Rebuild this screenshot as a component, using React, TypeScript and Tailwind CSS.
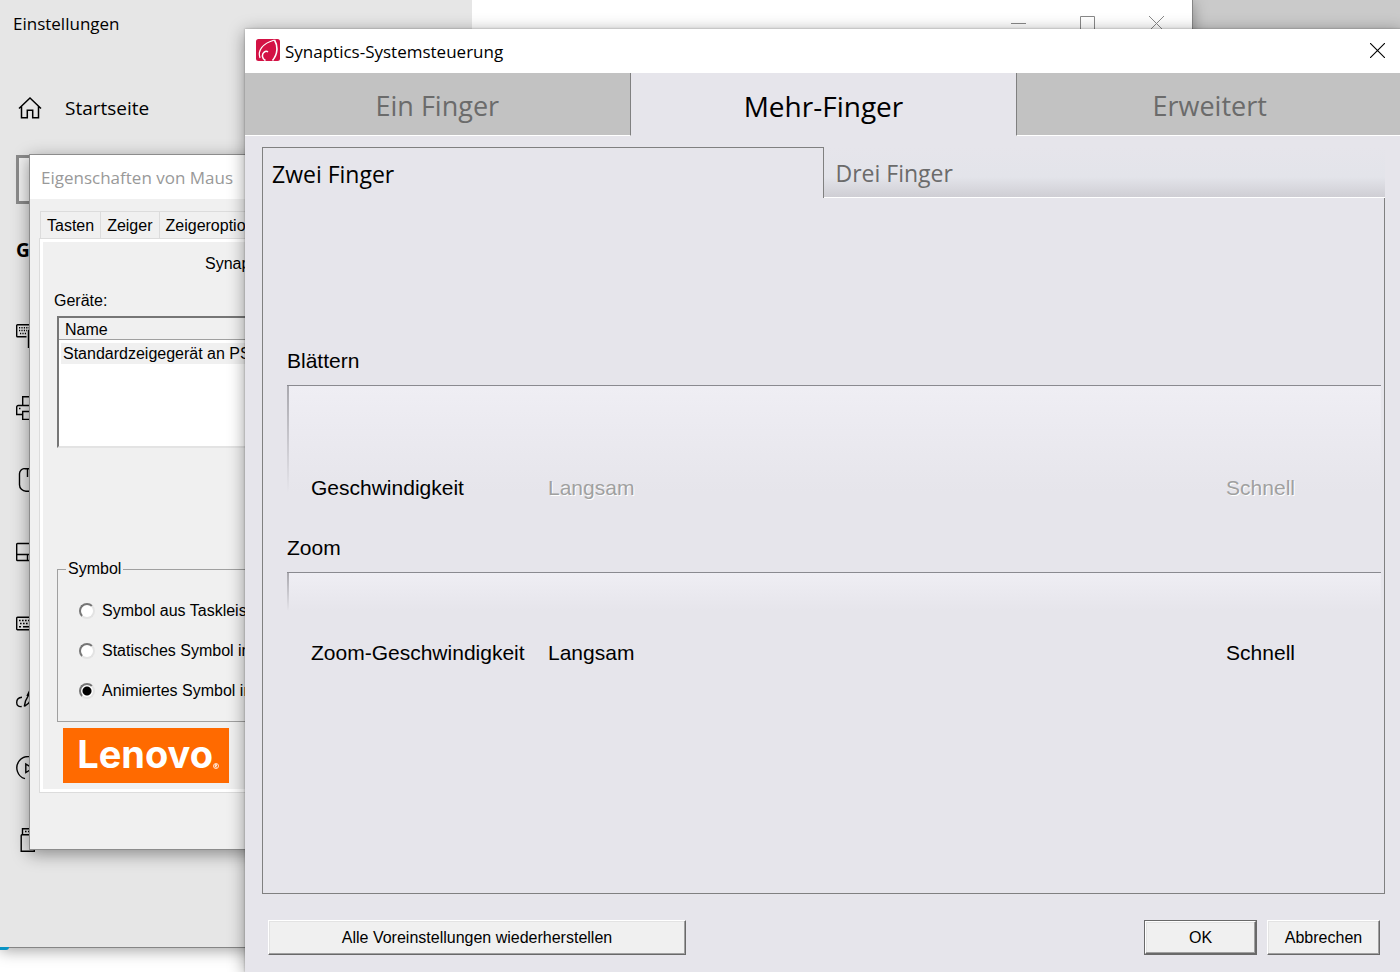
import type { ReactNode } from 'react';

const segoe = "font-['Open_Sans','Noto_Sans',sans-serif]";
const arial = "font-['Liberation_Sans',Arial,sans-serif]";

function Glyph({ children }: { children: ReactNode }) {
  return (
    <svg viewBox="0 0 24 24" className="size-6 shrink-0" fill="none" stroke="#000" strokeWidth="1.4" aria-hidden="true">
      {children}
    </svg>
  );
}

const navIcons: { label: string; icon: ReactNode }[] = [
  {
    label: 'Bluetooth',
    icon: (
      <>
        <path d="M10.500 12.700H1.500a.8.8 0 0 1-.8-.8V1.500a.8.8 0 0 1 .8-.8H24M12.500 24V6.500H24" />
        <path d="M3 3.700h20M3 6.500h8M4 9.500h6" strokeDasharray="1.200 1.200" />
      </>
    ),
  },
  {
    label: 'Drucker',
    icon: (
      <>
        <path d="M6.700 9.500V.7h11V9.500M6.500 18.500H.7V11a1.500 1.500 0 0 1 1.500-1.500h20a1.500 1.500 0 0 1 1.500 1.500v7.500h-5.500" />
        <path d="M6.700 15.500h11v8h-11zM3 12.500h1.500" />
      </>
    ),
  },
  {
    label: 'Maus',
    icon: <path d="M9 .7h6a5 5 0 0 1 5 5v11a6.500 6.500 0 0 1-6.500 6.500h-3.500a6.500 6.500 0 0 1-6.500-6.500v-11a5 5 0 0 1 5.500-5zM11.500 1v8" />,
  },
  {
    label: 'Touchpad',
    icon: <path d="M1.500 3.500h21a.8.8 0 0 1 .8.8v15.400a.8.8 0 0 1-.8.8h-21a.8.8 0 0 1-.8-.8V4.300a.8.8 0 0 1 .8-.8zM1 14.500h22M11.500 14.500v6" />,
  },
  {
    label: 'Eingabe',
    icon: (
      <>
        <path d="M1.500 5.200h21a.8.8 0 0 1 .8.8v11a.8.8 0 0 1-.8.8h-21a.8.8 0 0 1-.8-.8V6a.8.8 0 0 1 .8-.8z" />
        <path d="M3 8.500h18M4 11.500h18" strokeDasharray="1.600 1.400" />
        <path d="M3 14.700h2M7 14.700h10" />
      </>
    ),
  },
  {
    label: 'Stift',
    icon: <path d="M6 13.300C2.500 13.500.7 15.500.7 18.500s1.800 4.500 5 4M8.300 22.500l1.200-5.500L18 1M8.300 22.500l4.200-3.200 6-10M11 12L16 2" />,
  },
  {
    label: 'Automatische Wiedergabe',
    icon: <path d="M9 22.700A11.300 11.300 0 1 1 14 23M9.800 8v8.500l7-4.200z" />,
  },
  {
    label: 'USB',
    icon: (
      <>
        <path d="M6.500 6.500V.7h10v5.800M5.500 6.700h12a.8.8 0 0 1 .8.8v15.700H5.200V7.500a.8.8 0 0 1 .8-.8z" />
        <path d="M9 3.500h1.500M12 3.500h1.500" />
      </>
    ),
  },
];

function SettingsWindow() {
  return (
    <section
      aria-label="Einstellungen"
      className={`absolute top-0 right-[207px] bottom-6 left-0 flex border-r border-b border-[#858585] bg-white shadow-[0_3px_14px_rgba(0,0,0,0.35)] ${segoe}`}
    >
      <aside className="flex w-[472px] flex-col bg-[#e6e6e6]">
        <h1 className="px-[13px] pt-3 text-[17px] leading-6">Einstellungen</h1>
        <a href="#start" className="mt-[54px] flex h-9 items-center gap-[23px] px-[18px] text-[19px]">
          <svg viewBox="0 0 24 24" className="size-6 shrink-0" fill="none" stroke="#000" strokeWidth="1.500" aria-hidden="true">
            <path d="M1 12.500L12 2l11 10.500M3.500 10.500v11.200h5.800v-7.500h5.400v7.500h5.800V10.500" />
          </svg>
          Startseite
        </a>
        <input
          type="text"
          aria-label="Einstellung suchen"
          className="mt-[29px] ml-4 h-[49px] w-[430px] border-[3px] border-[#8a8a8a] bg-[#f0f0f0]"
        />
        <h2 className="mt-8 px-4 text-[19px] leading-7 font-bold">G</h2>
        <nav className="mt-9 flex flex-col">
          {navIcons.map((item) => (
            <a key={item.label} href="#geraete" aria-label={item.label} className="flex h-[72px] items-center px-4">
              <Glyph>{item.icon}</Glyph>
            </a>
          ))}
        </nav>
      </aside>
      <div className="flex flex-1 items-start justify-end gap-[54px] pt-4 pr-7 text-[#888]">
        <button type="button" aria-label="Minimieren">
          <svg viewBox="0 0 15 15" className="size-[15px]" fill="none" stroke="currentColor" aria-hidden="true">
            <path d="M0 7.500h15" />
          </svg>
        </button>
        <button type="button" aria-label="Maximieren">
          <svg viewBox="0 0 15 15" className="size-[15px]" fill="none" stroke="currentColor" aria-hidden="true">
            <path d="M.5.5h14v14H.5z" />
          </svg>
        </button>
        <button type="button" aria-label="Schließen">
          <svg viewBox="0 0 15 15" className="size-[15px]" fill="none" stroke="currentColor" aria-hidden="true">
            <path d="M0 0l15 15M15 0L0 15" />
          </svg>
        </button>
      </div>
    </section>
  );
}

const symbolOptions = ['Symbol aus Taskleis', 'Statisches Symbol in', 'Animiertes Symbol in'];

function MouseWindow() {
  return (
    <section
      aria-label="Eigenschaften von Maus"
      className={`absolute top-[154px] left-[29px] w-[500px] border border-[#8c8c8c] bg-[#f0f0f0] text-base shadow-[0_4px_16px_rgba(0,0,0,0.4)] ${arial}`}
    >
      <h2 className={`bg-white pt-0.5 pl-[11px] text-[17px] leading-[42px] text-[#999] ${segoe}`}>Eigenschaften von Maus</h2>
      <div className="px-[9px] pt-3 pb-14">
        <div role="tablist" className="ml-px flex border-t border-l border-[#dcdcdc]">
          {['Tasten', 'Zeiger', 'Zeigeroptio'].map((tab) => (
            <button key={tab} type="button" role="tab" className="border-r border-[#dcdcdc] px-1.5 pt-0.5 leading-6">
              {tab}
            </button>
          ))}
        </div>
        <div className="border border-[#dcdcdc]">
          <div className="border-[3px] border-white px-[14px] pt-2.5 pb-1.5">
            <p className="pl-[148px] leading-6">Synap</p>
            <p className="-ml-[3px] mt-[13px] leading-6">Geräte:</p>
            <div className="mt-[3px] h-[132px] border-2 border-t-[#767676] border-r-white border-b-[#e3e3e3] border-l-[#767676] bg-white">
              <table className="w-full border-separate border-spacing-0 text-left">
                <thead>
                  <tr className="bg-[#f0f0f0]">
                    <th className="border-b border-[#a0a0a0] px-1.5 pt-0.5 leading-[19px] font-normal">Name</th>
                  </tr>
                </thead>
                <tbody>
                  <tr>
                    <td className="px-0.5 pt-[3px] leading-[21px]">
                      <span className="block bg-[#f0f0f0] pl-0.5">Standardzeigegerät an PS</span>
                    </td>
                  </tr>
                </tbody>
              </table>
            </div>
            <fieldset className="mt-[109px] border border-[#a0a0a0] pb-[18px] pl-[21px]">
              <legend className="-ml-[13px] px-0.5 leading-6">Symbol</legend>
              <div className="flex flex-col gap-4 pt-[18px]">
                {symbolOptions.map((option, index) => (
                  <label key={option} className="flex items-center gap-[7px] leading-6">
                    <input
                      type="radio"
                      name="symbol"
                      defaultChecked={index === 2}
                      className="size-4 appearance-none rounded-full border-2 border-t-[#767676] border-r-[#e3e3e3] border-b-[#e3e3e3] border-l-[#767676] bg-white checked:bg-[radial-gradient(circle,#000_4px,#fff_5px)]"
                    />
                    {option}
                  </label>
                ))}
              </div>
            </fieldset>
            <div className="mt-1.5 ml-1.5 flex h-[55px] w-[166px] items-center justify-end bg-[#ff6a00] pr-2.5 text-white">
              <span className="pb-0.5 font-['Inter',sans-serif] text-[38px] leading-[53px] font-bold">Lenovo</span>
              <svg viewBox="0 0 6 6" className="mt-5 size-1.5" fill="none" stroke="#fff" strokeWidth="0.800" aria-hidden="true">
                <circle cx="3" cy="3" r="2.500" />
                <path d="M2.200 4.500v-3h1.300v1.500H2.200l1.600 1.500" />
              </svg>
            </div>
          </div>
        </div>
      </div>
    </section>
  );
}

function SpeedRow({ label, disabled = false }: { label: string; disabled?: boolean }) {
  const tone = disabled ? 'text-[#a0a0a0] [text-shadow:1px_1px_0_#fff]' : 'text-black';
  return (
    <div className="flex pr-[86px] pl-6 leading-6">
      <span className="w-[237px]">{label}</span>
      <span className={`flex-1 ${tone}`}>Langsam</span>
      <span className={tone}>Schnell</span>
    </div>
  );
}

function GroupEdge({ className }: { className: string }) {
  return (
    <div className={`flex border-t border-[#8a8a90] bg-linear-to-b from-[#efeef4] to-[#e6e5eb] ${className}`}>
      <div className="w-0.5 bg-linear-to-b from-[#a9a8ae] to-[#e6e5eb]" />
    </div>
  );
}

const bevel = 'border-t-white border-l-white border-r-[#696969] border-b-[#696969] shadow-[inset_-1px_-1px_0_#a0a0a0,inset_1px_1px_0_#e3e3e3]';

function SynapticsWindow() {
  return (
    <section
      aria-label="Synaptics-Systemsteuerung"
      className={`absolute top-[29px] -right-0.5 bottom-0 left-[245px] flex flex-col bg-[#e6e5eb] shadow-[0_0_2px_rgba(0,0,0,0.3),0_3px_16px_rgba(0,0,0,0.4)] ${segoe}`}
    >
      <header className="flex h-11 items-center bg-white pr-[17px] pb-0.5 pl-[11px]">
        <svg viewBox="0 0 24 22" className="h-[22px] w-6" fill="none" stroke="#fff" aria-hidden="true">
          <rect width="24" height="22" rx="2.500" fill="#d31245" stroke="none" />
          <path d="M4 19C1.500 12 6 4.500 18.500 1" strokeWidth="1.200" />
          <path d="M18.500 1c3.500 6 3.500 14-2 20.500" strokeWidth="1.600" />
          <path d="M9.500 21.500C6 20 5.500 15.500 8 13.300c1.200-1 3-1.200 4-.3" strokeWidth="1.500" />
        </svg>
        <h2 className="flex-1 pt-[3px] pl-[5px] text-[17px]">Synaptics-Systemsteuerung</h2>
        <button type="button" aria-label="Schließen">
          <svg viewBox="0 0 15 15" className="size-[15px]" fill="none" stroke="#000" strokeWidth="1.100" aria-hidden="true">
            <path d="M0 0l15 15M15 0L0 15" />
          </svg>
        </button>
      </header>
      <div role="tablist" className="grid grid-cols-3 text-[27px] text-[#6b6b6b]">
        <button type="button" role="tab" className="border-r border-b border-r-[#808080] border-b-white bg-[#c2c2c2] pt-1 leading-[58px]">
          Ein Finger
        </button>
        <button type="button" role="tab" aria-selected="true" className="pt-0.5 text-[28px] leading-[60px] text-black">
          Mehr-Finger
        </button>
        <button type="button" role="tab" className="border-b border-l border-b-white border-l-[#808080] bg-[#c2c2c2] pt-1 leading-[58px]">
          Erweitert
        </button>
      </div>
      <div className="flex flex-1 flex-col px-[17px] pt-[11px]">
        <div role="tablist" className="grid grid-cols-2 text-[23px]">
          <button type="button" role="tab" aria-selected="true" className="border-t border-r border-l border-[#808080] pt-0.5 pl-[9px] text-left leading-[48px]">
            Zwei Finger
          </button>
          <button
            type="button"
            role="tab"
            className="border-b border-white bg-linear-to-b from-[#e6e5eb] via-[#e3e4ea] via-60% to-[#cfced4] pt-0.5 pl-3 text-left leading-[48px] text-[#6b6b6b]"
          >
            Drei Finger
          </button>
        </div>
        <div role="tabpanel" className={`flex-1 border-r border-b border-l border-[#808080] pt-[151px] pr-[3px] pl-6 text-[21px] ${arial}`}>
          <h3 className="leading-6">Blättern</h3>
          <GroupEdge className="-mb-4 mt-3 h-[107px]" />
          <SpeedRow label="Geschwindigkeit" disabled />
          <h3 className="mt-9 leading-6">Zoom</h3>
          <GroupEdge className="mt-3 mb-[30px] h-[39px]" />
          <SpeedRow label="Zoom-Geschwindigkeit" />
        </div>
      </div>
      <footer className={`flex gap-2.5 pt-[26px] pr-[22px] pb-[17px] pl-[23px] text-base ${arial}`}>
        <button type="button" className={`h-[35px] w-[418px] border bg-[#f0f0f0] ${bevel}`}>
          Alle Voreinstellungen wiederherstellen
        </button>
        <div className="ml-auto flex border border-[#696969]">
          <button type="button" className={`w-[111px] border bg-[#f0f0f0] ${bevel}`}>
            OK
          </button>
        </div>
        <button type="button" className={`h-[35px] w-[113px] border bg-[#f0f0f0] ${bevel}`}>
          Abbrechen
        </button>
      </footer>
    </section>
  );
}

export default function App() {
  return (
    <main className="relative h-screen overflow-hidden bg-[linear-gradient(90deg,#fff_1192px,#cacaca_1192px)] text-black">
      <SettingsWindow />
      <div className="absolute bottom-[22px] left-0 h-[3px] w-[9px] rounded-br bg-[#0a94c4]" />
      <MouseWindow />
      <SynapticsWindow />
    </main>
  );
}
